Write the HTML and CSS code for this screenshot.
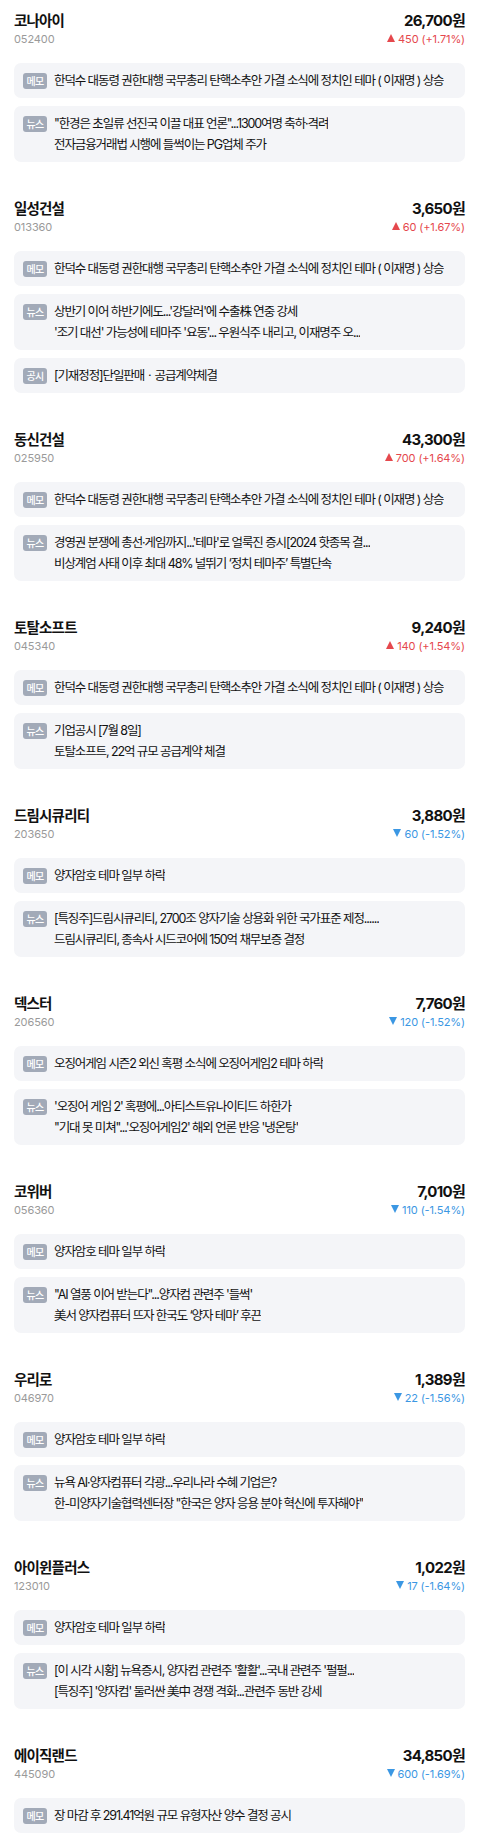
FILE: index.html
```html
<!DOCTYPE html>
<html lang="ko">
<head>
    <meta charset="UTF-8">
    <meta name="viewport" content="width=device-width, initial-scale=1.0">
    <title>관심 종목 메모</title>
    <link rel="stylesheet" href="styles.css">
</head>
<body>
    <div class="stock">
        <div class="head">
            <div>
                <div class="name">코나아이</div>
                <div class="code">052400</div>
            </div>
            <div class="right">
                <div class="price">26,700원</div>
                <div class="change up"><i class="tri"></i>450 (+1.71%)</div>
            </div>
        </div>
        <div class="note">
            <span class="badge">메모</span>
            <div class="lines"><div>한덕수 대동령 권한대행 국무총리 탄핵소추안 가결 소식에 정치인 테마 ( 이재명 ) 상승</div></div>
        </div>
        <div class="note">
            <span class="badge">뉴스</span>
            <div class="lines">
                <div>"한경은 초일류 선진국 이끌 대표 언론"...1300여명 축하·격려</div>
                <div>전자금융거래법 시행에 들썩이는 PG업체 주가</div>
            </div>
        </div>
    </div>

    <div class="stock">
        <div class="head">
            <div>
                <div class="name">일성건설</div>
                <div class="code">013360</div>
            </div>
            <div class="right">
                <div class="price">3,650원</div>
                <div class="change up"><i class="tri"></i>60 (+1.67%)</div>
            </div>
        </div>
        <div class="note">
            <span class="badge">메모</span>
            <div class="lines"><div>한덕수 대동령 권한대행 국무총리 탄핵소추안 가결 소식에 정치인 테마 ( 이재명 ) 상승</div></div>
        </div>
        <div class="note">
            <span class="badge">뉴스</span>
            <div class="lines">
                <div>상반기 이어 하반기에도...'강달러'에 수출株 연중 강세</div>
                <div>'조기 대선' 가능성에 테마주 '요동'... 우원식주 내리고, 이재명주 오...</div>
            </div>
        </div>
        <div class="note">
            <span class="badge">공시</span>
            <div class="lines"><div>[기재정정]단일판매ㆍ공급계약체결</div></div>
        </div>
    </div>

    <div class="stock">
        <div class="head">
            <div>
                <div class="name">동신건설</div>
                <div class="code">025950</div>
            </div>
            <div class="right">
                <div class="price">43,300원</div>
                <div class="change up"><i class="tri"></i>700 (+1.64%)</div>
            </div>
        </div>
        <div class="note">
            <span class="badge">메모</span>
            <div class="lines"><div>한덕수 대동령 권한대행 국무총리 탄핵소추안 가결 소식에 정치인 테마 ( 이재명 ) 상승</div></div>
        </div>
        <div class="note">
            <span class="badge">뉴스</span>
            <div class="lines">
                <div>경영권 분쟁에 총선·게임까지...'테마'로 얼룩진 증시[2024 핫종목 결...</div>
                <div>비상계엄 사태 이후 최대 48% 널뛰기 ‘정치 테마주’ 특별단속</div>
            </div>
        </div>
    </div>

    <div class="stock">
        <div class="head">
            <div>
                <div class="name">토탈소프트</div>
                <div class="code">045340</div>
            </div>
            <div class="right">
                <div class="price">9,240원</div>
                <div class="change up"><i class="tri"></i>140 (+1.54%)</div>
            </div>
        </div>
        <div class="note">
            <span class="badge">메모</span>
            <div class="lines"><div>한덕수 대동령 권한대행 국무총리 탄핵소추안 가결 소식에 정치인 테마 ( 이재명 ) 상승</div></div>
        </div>
        <div class="note">
            <span class="badge">뉴스</span>
            <div class="lines">
                <div>기업공시 [7월 8일]</div>
                <div>토탈소프트, 22억 규모 공급계약 체결</div>
            </div>
        </div>
    </div>

    <div class="stock">
        <div class="head">
            <div>
                <div class="name">드림시큐리티</div>
                <div class="code">203650</div>
            </div>
            <div class="right">
                <div class="price">3,880원</div>
                <div class="change down"><i class="tri"></i>60 (-1.52%)</div>
            </div>
        </div>
        <div class="note">
            <span class="badge">메모</span>
            <div class="lines"><div>양자암호 테마 일부 하락</div></div>
        </div>
        <div class="note">
            <span class="badge">뉴스</span>
            <div class="lines">
                <div>[특징주]드림시큐리티, 2700조 양자기술 상용화 위한 국가표준 제정......</div>
                <div>드림시큐리티, 종속사 시드코어에 150억 채무보증 결정</div>
            </div>
        </div>
    </div>

    <div class="stock">
        <div class="head">
            <div>
                <div class="name">덱스터</div>
                <div class="code">206560</div>
            </div>
            <div class="right">
                <div class="price">7,760원</div>
                <div class="change down"><i class="tri"></i>120 (-1.52%)</div>
            </div>
        </div>
        <div class="note">
            <span class="badge">메모</span>
            <div class="lines"><div>오징어게임 시즌2 외신 혹평 소식에 오징어게임2 테마 하락</div></div>
        </div>
        <div class="note">
            <span class="badge">뉴스</span>
            <div class="lines">
                <div>'오징어 게임 2' 혹평에...아티스트유나이티드 하한가</div>
                <div>"기대 못 미쳐"...'오징어게임2' 해외 언론 반응 '냉온탕'</div>
            </div>
        </div>
    </div>

    <div class="stock">
        <div class="head">
            <div>
                <div class="name">코위버</div>
                <div class="code">056360</div>
            </div>
            <div class="right">
                <div class="price">7,010원</div>
                <div class="change down"><i class="tri"></i>110 (-1.54%)</div>
            </div>
        </div>
        <div class="note">
            <span class="badge">메모</span>
            <div class="lines"><div>양자암호 테마 일부 하락</div></div>
        </div>
        <div class="note">
            <span class="badge">뉴스</span>
            <div class="lines">
                <div>"AI 열풍 이어 받는다"...양자컴 관련주 '들썩'</div>
                <div>美서 양자컴퓨터 뜨자 한국도 ‘양자 테마’ 후끈</div>
            </div>
        </div>
    </div>

    <div class="stock">
        <div class="head">
            <div>
                <div class="name">우리로</div>
                <div class="code">046970</div>
            </div>
            <div class="right">
                <div class="price">1,389원</div>
                <div class="change down"><i class="tri"></i>22 (-1.56%)</div>
            </div>
        </div>
        <div class="note">
            <span class="badge">메모</span>
            <div class="lines"><div>양자암호 테마 일부 하락</div></div>
        </div>
        <div class="note">
            <span class="badge">뉴스</span>
            <div class="lines">
                <div>뉴욕 AI·양자컴퓨터 각광...우리나라 수혜 기업은?</div>
                <div>한-미양자기술협력센터장 "한국은 양자 응용 분야 혁신에 투자해야"</div>
            </div>
        </div>
    </div>

    <div class="stock">
        <div class="head">
            <div>
                <div class="name">아이윈플러스</div>
                <div class="code">123010</div>
            </div>
            <div class="right">
                <div class="price">1,022원</div>
                <div class="change down"><i class="tri"></i>17 (-1.64%)</div>
            </div>
        </div>
        <div class="note">
            <span class="badge">메모</span>
            <div class="lines"><div>양자암호 테마 일부 하락</div></div>
        </div>
        <div class="note">
            <span class="badge">뉴스</span>
            <div class="lines">
                <div>[이 시각 시황] 뉴욕증시, 양자컴 관련주 '활활'...국내 관련주 '펄펄...</div>
                <div>[특징주] '양자컴' 둘러싼 美中 경쟁 격화...관련주 동반 강세</div>
            </div>
        </div>
    </div>

    <div class="stock">
        <div class="head">
            <div>
                <div class="name">에이직랜드</div>
                <div class="code">445090</div>
            </div>
            <div class="right">
                <div class="price">34,850원</div>
                <div class="change down"><i class="tri"></i>600 (-1.69%)</div>
            </div>
        </div>
        <div class="note">
            <span class="badge">메모</span>
            <div class="lines"><div>장 마감 후 291.41억원 규모 유형자산 양수 결정 공시</div></div>
        </div>
    </div>
</body>
</html>
```

FILE: styles.css
```css
body {
    margin: 0;
    font-family: Inter, "Noto Sans CJK KR", sans-serif;
    background-color: #fff;
    color: #111;
}

.stock {
    padding: 11px 14px 18px;
}

.head {
    display: flex;
    justify-content: space-between;
    margin-bottom: 16px;
}

.name {
    font-size: 14.5px;
    font-weight: 700;
    line-height: 20px;
    letter-spacing: -0.8px;
}

.code {
    font-size: 11px;
    line-height: 16px;
    color: #9a9a9a;
    letter-spacing: -0.1px;
}

.right {
    text-align: right;
}

.price {
    font-size: 15px;
    font-weight: 700;
    line-height: 20px;
    letter-spacing: -0.7px;
}

.change {
    font-size: 11px;
    line-height: 16px;
    letter-spacing: -0.1px;
}

/* little triangle before the change value */
.tri {
    display: inline-block;
    width: 0;
    height: 0;
    margin-right: 3px;
    border-left: 4.5px solid transparent;
    border-right: 4.5px solid transparent;
    vertical-align: 1px;
}

.up {
    color: #e5484d;
}

.up .tri {
    border-bottom: 8px solid currentColor;
}

.down {
    color: #3b97e3;
}

.down .tri {
    border-top: 8px solid currentColor;
}

.note {
    display: flex;
    gap: 7px;
    padding: 7px 9px;
    margin-bottom: 8px;
    background-color: #f4f5f8;
    border-radius: 7px;
}

.badge {
    flex: none;
    width: 24px;
    height: 16px;
    margin-top: 2.5px;
    border-radius: 3px;
    background-color: #a2aab8;
    color: #fff;
    font-size: 10px;
    font-weight: 500;
    line-height: 16px;
    text-align: center;
    letter-spacing: -0.6px;
}

.lines {
    min-width: 0;
    font-size: 12.5px;
    line-height: 21px;
    letter-spacing: -1.1px;
}

.lines div {
    white-space: nowrap;
    overflow: hidden;
    text-overflow: ellipsis;
}
```
